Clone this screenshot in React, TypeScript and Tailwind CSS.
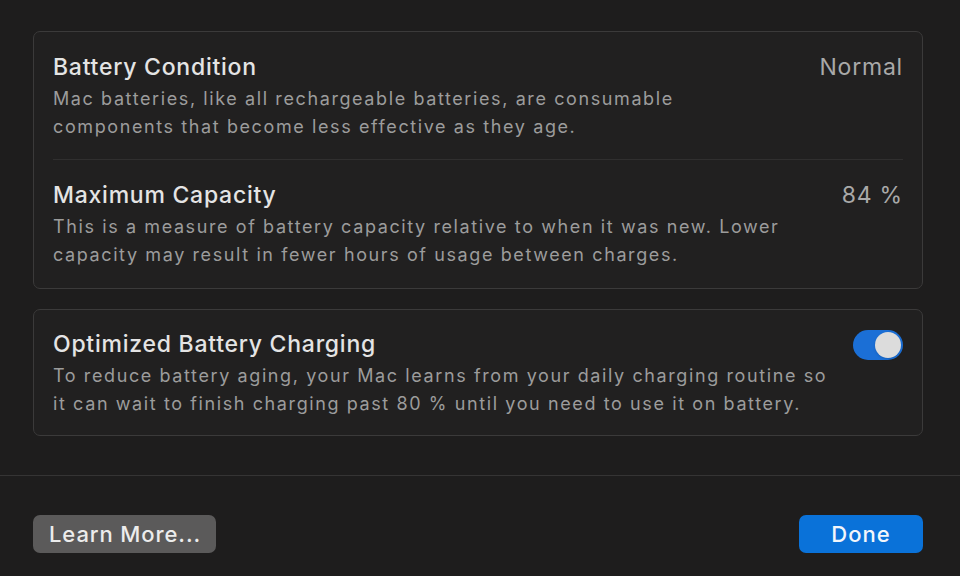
import { useState } from 'react';

function Desc({ lines }: { lines: string[] }) {
  return (
    <p className="mt-1 whitespace-nowrap text-[18px] leading-[28px] tracking-[1.6px] text-[#9c9c9c]">
      {lines.map((l, i) => (
        <span key={i} className="block">
          {l}
        </span>
      ))}
    </p>
  );
}

function Row({ title, value, lines, last }: { title: string; value: string; lines: string[]; last?: boolean }) {
  return (
    <div className={last ? 'pt-[21px] pb-[19px]' : 'pt-[21px] pb-[18px] border-b border-[#302f2f]'}>
      <div className="flex items-start justify-between">
        <div className="text-[23px] leading-[28px] font-medium tracking-[0.75px] text-[#e4e4e4]">{title}</div>
        <div className="text-[23px] leading-[28px] tracking-[0.8px] text-[#a9a9a9]">{value}</div>
      </div>
      <Desc lines={lines} />
    </div>
  );
}

function Toggle({ on, onChange }: { on: boolean; onChange: (v: boolean) => void }) {
  return (
    <button
      onClick={() => onChange(!on)}
      className={`flex h-[30px] w-[50px] shrink-0 items-center rounded-full p-[2px] ${on ? 'justify-end bg-[#1b6fd6]' : 'justify-start bg-[#444]'}`}
    >
      <span className="h-[26px] w-[26px] rounded-full bg-[#dcdcdc] shadow" />
    </button>
  );
}

export default function App() {
  const [optimized, setOptimized] = useState(true);

  return (
    <div
      className="flex h-[576px] w-[960px] flex-col overflow-hidden bg-[#1e1d1d]"
      style={{ fontFamily: 'Inter, "Noto Sans", sans-serif' }}
    >
      <div className="pl-[33px] pr-[37px] pt-[31px]">
        <div className="rounded-[7px] border border-[#3b3a3a] bg-[#212020] px-[19px]">
          <Row
            title="Battery Condition"
            value="Normal"
            lines={[
              'Mac batteries, like all rechargeable batteries, are consumable',
              'components that become less effective as they age.',
            ]}
          />
          <Row
            title="Maximum Capacity"
            value="84 %"
            lines={[
              'This is a measure of battery capacity relative to when it was new. Lower',
              'capacity may result in fewer hours of usage between charges.',
            ]}
            last
          />
        </div>

        <div className="mt-[20px] flex items-start justify-between rounded-[7px] border border-[#3b3a3a] bg-[#212020] px-[19px] pt-[20px] pb-[17px]">
          <div>
            <div className="text-[23px] leading-[28px] font-medium tracking-[0.75px] text-[#e4e4e4]">
              Optimized Battery Charging
            </div>
            <Desc
              lines={[
                'To reduce battery aging, your Mac learns from your daily charging routine so',
                'it can wait to finish charging past 80 % until you need to use it on battery.',
              ]}
            />
          </div>
          <Toggle on={optimized} onChange={setOptimized} />
        </div>
      </div>

      <div className="mt-[39px] border-t border-[#353434]" />

      <div className="flex items-center justify-between pl-[33px] pr-[37px] pt-[39px]">
        <button className="h-[38px] w-[183px] rounded-[7px] bg-[#5b5a5a] pl-[16px] text-left text-[22px] font-medium tracking-[0.9px] text-[#ececec]">
          Learn More...
        </button>
        <button className="h-[38px] w-[124px] rounded-[7px] bg-[#0a72d9] text-[22px] font-medium tracking-[1px] text-[#f2f6fb]">
          Done
        </button>
      </div>
    </div>
  );
}
